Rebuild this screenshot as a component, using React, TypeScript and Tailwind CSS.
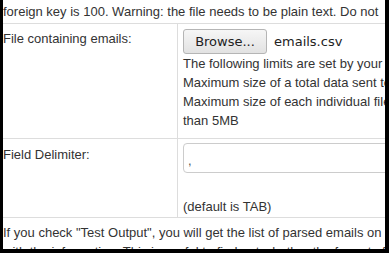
export default function App() {
  return (
    <div className="h-[253px] w-[389px] overflow-hidden bg-black">
      <div
        className="ml-[3px] mr-[4px] h-[249px] overflow-hidden bg-white text-[13px] leading-[19px] text-[#333]"
        style={{ fontFamily: '"Liberation Sans", Arial, sans-serif' }}
      >
        <p className="whitespace-nowrap pt-[2px] pb-[2px]">
          foreign key is 100. Warning: the file needs to be plain text. Do not
        </p>

        {/* File row */}
        <div className="flex border-t border-[#ddd]">
          <div className="w-[174px] shrink-0 pt-[5px] whitespace-nowrap">File containing emails:</div>
          <div className="flex-1 border-l border-[#ddd] pl-[5px] pt-[5px] pb-[8px] whitespace-nowrap">
            <div className="flex h-[25px] items-center gap-[7px]">
              <button
                className="h-[25px] w-[84px] rounded-[3px] border border-[#b5b5b5] bg-gradient-to-b from-[#f6f6f6] to-[#e2e2e2] text-[13px] text-[#222]"
                style={{ fontFamily: '"DejaVu Sans", sans-serif' }}
              >
                Browse...
              </button>
              <span className="text-[13px] text-[#222]" style={{ fontFamily: '"DejaVu Sans", sans-serif' }}>
                emails.csv
              </span>
            </div>
            <div>
              <div>The following limits are set by your server:</div>
              <div>Maximum size of a total data sent to server is 8MB</div>
              <div>Maximum size of each individual file cannot be more</div>
              <div>than 5MB</div>
            </div>
          </div>
        </div>

        {/* Delimiter row */}
        <div className="flex border-t border-[#ddd]">
          <div className="w-[174px] shrink-0 pt-[6px] whitespace-nowrap">Field Delimiter:</div>
          <div className="flex-1 border-l border-[#ddd] pl-[5px] pt-[4px] pb-[1px] whitespace-nowrap">
            <input
              defaultValue=","
              className="h-[30px] w-[240px] rounded-[4px] border border-[#ccc] px-[4px] pt-[5px] text-[13px] text-[#555] outline-none"
            />
            <div className="mt-[24px]">(default is TAB)</div>
          </div>
        </div>

        <div className="border-t border-[#ddd] pt-[5px] whitespace-nowrap">
          <div>If you check "Test Output", you will get the list of parsed emails on</div>
          <div>with the information. This is useful to find out whether the format of</div>
        </div>
      </div>
    </div>
  );
}
